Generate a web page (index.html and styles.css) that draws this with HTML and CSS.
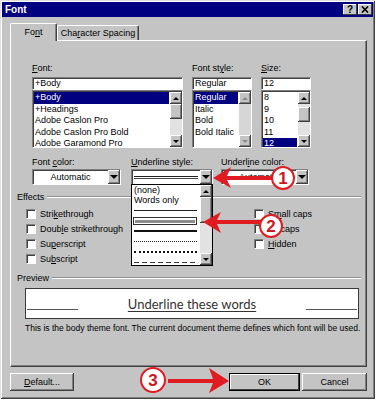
FILE: index.html
```html
<!DOCTYPE html>
<html lang="en">
<head>
    <meta charset="UTF-8">
    <title>Font</title>
    <link rel="stylesheet" href="styles.css">
</head>
<body>

<div class="dialog">
    <div class="titlebar">
        <span class="title">Font</span>
        <div class="title-buttons">
            <span class="tbtn">?</span>
            <span class="tbtn">
                <svg width="8" height="7" viewBox="0 0 8 7"><path d="M1 0.5 L7 6.5 M7 0.5 L1 6.5" stroke="#000" stroke-width="1.6"/></svg>
            </span>
        </div>
    </div>

    <div class="content">
        <div class="tabs">
            <div class="tab active">Fo<u>n</u>t</div>
            <div class="tab">Cha<u>r</u>acter Spacing</div>
        </div>

        <div class="panel">
            <div class="pickers">
                <div class="picker picker-font">
                    <div class="lbl"><u>F</u>ont:</div>
                    <div class="field">+Body</div>
                    <div class="list">
                        <div class="items">
                            <div class="item sel">+Body</div>
                            <div class="item">+Headings</div>
                            <div class="item">Adobe Caslon Pro</div>
                            <div class="item">Adobe Caslon Pro Bold</div>
                            <div class="item">Adobe Garamond Pro</div>
                        </div>
                        <div class="sbar">
                            <div class="sbtn"><i class="up"></i></div>
                            <div class="thumb"></div>
                            <div class="track"></div>
                            <div class="sbtn"><i class="down"></i></div>
                        </div>
                    </div>
                </div>
                <div class="picker picker-style">
                    <div class="lbl">Font st<u>y</u>le:</div>
                    <div class="field">Regular</div>
                    <div class="list">
                        <div class="items">
                            <div class="item sel">Regular</div>
                            <div class="item">Italic</div>
                            <div class="item">Bold</div>
                            <div class="item">Bold Italic</div>
                        </div>
                        <div class="sbar disabled">
                            <div class="sbtn"><i class="up"></i></div>
                            <div class="track"></div>
                            <div class="sbtn"><i class="down"></i></div>
                        </div>
                    </div>
                </div>
                <div class="picker picker-size">
                    <div class="lbl"><u>S</u>ize:</div>
                    <div class="field">12</div>
                    <div class="list">
                        <div class="items">
                            <div class="item">8</div>
                            <div class="item">9</div>
                            <div class="item">10</div>
                            <div class="item">11</div>
                            <div class="item sel">12</div>
                        </div>
                        <div class="sbar">
                            <div class="sbtn"><i class="up"></i></div>
                            <div class="track short"></div>
                            <div class="thumb"></div>
                            <div class="track"></div>
                            <div class="sbtn"><i class="down"></i></div>
                        </div>
                    </div>
                </div>
            </div>

            <div class="dropdowns">
                <div class="dropdown dd-color">
                    <div class="lbl">Font <u>c</u>olor:</div>
                    <div class="combo">
                        <div class="combo-value">Automatic</div>
                        <div class="combo-btn"><i class="down big"></i></div>
                    </div>
                </div>
                <div class="dropdown dd-style">
                    <div class="lbl"><u>U</u>nderline style:</div>
                    <div class="combo">
                        <div class="combo-value"><span class="uline single"></span></div>
                        <div class="combo-btn"><i class="down big"></i></div>
                    </div>
                </div>
                <div class="dropdown dd-ucolor">
                    <div class="lbl">Underl<u>i</u>ne color:</div>
                    <div class="combo">
                        <div class="combo-value">Automatic</div>
                        <div class="combo-btn"><i class="down big"></i></div>
                    </div>
                </div>
            </div>

            <div class="group effects-group">
                <div class="group-head"><span>Effects</span></div>
                <div class="effects">
                    <div class="col col-left">
                        <div class="check"><span class="box"></span>Stri<u>k</u>ethrough</div>
                        <div class="check"><span class="box"></span>Doub<u>l</u>e strikethrough</div>
                        <div class="check"><span class="box"></span>Su<u>p</u>erscript</div>
                        <div class="check"><span class="box"></span>Su<u>b</u>script</div>
                    </div>
                    <div class="col">
                        <div class="check"><span class="box"></span>S<u>m</u>all caps</div>
                        <div class="check"><span class="box"></span><u>A</u>ll caps</div>
                        <div class="check"><span class="box"></span><u>H</u>idden</div>
                    </div>
                </div>
            </div>

            <div class="group preview-group">
                <div class="group-head"><span>Preview</span></div>
                <div class="preview-box">
                    <span class="pline"></span>
                    <span class="sample">Underline these words</span>
                    <span class="pline"></span>
                </div>
                <div class="desc">This is the body theme font. The current document theme defines which font will be used.</div>
            </div>
        </div>

        <div class="actions">
            <div class="btn btn-default"><u>D</u>efault...</div>
            <div class="spacer"></div>
            <div class="btn btn-ok">OK</div>
            <div class="btn btn-cancel">Cancel</div>
        </div>
    </div>

    <!-- open underline style list -->
    <div class="droplist">
        <div class="drop-items">
            <div class="drow">(none)</div>
            <div class="drow">Words only</div>
            <div class="drow"><span class="uline single"></span></div>
            <div class="drow"><span class="focus"><span class="uline grey"></span></span></div>
            <div class="drow"><span class="uline thick"></span></div>
            <div class="drow"><span class="uline dotted"></span></div>
            <div class="drow"><span class="uline dotted-bold"></span></div>
            <div class="drow"><span class="uline dashed"></span></div>
        </div>
        <div class="sbar">
            <div class="sbtn"><i class="up"></i></div>
            <div class="thumb tall"></div>
            <div class="track"></div>
            <div class="sbtn"><i class="down"></i></div>
        </div>
    </div>

    <svg class="marks" width="376" height="400" viewBox="0 0 376 400">
        <g fill="#e01b22">
            <polygon points="213,178 231,167 227,176 272,176 272,180 227,180 231,188"/>
            <polygon points="203,222 221,212 217,220 261,220 261,224 217,224 221,233"/>
            <polygon points="229,381 209,368 213,379 168,379 168,383 213,383 209,393"/>
        </g>
        <g fill="#fff" stroke="#e01b22" stroke-width="2">
            <circle cx="283" cy="178" r="11"/>
            <circle cx="271" cy="226" r="11"/>
            <circle cx="153" cy="380" r="12"/>
        </g>
        <g class="num" fill="#d0151c" text-anchor="middle">
            <text x="283" y="184">1</text>
            <text x="271" y="232">2</text>
            <text x="153" y="386">3</text>
        </g>
    </svg>
</div>

</body>
</html>
```

FILE: styles.css
```css
* {
    box-sizing: border-box;
}
body {
    margin: 0;
    background: #fff;
    font-family: "Liberation Sans", Arial, sans-serif;
    font-size: 9px;
    color: #000;
}
u {
    text-underline-offset: 1px;
}
.dialog {
    position: relative;
    width: 375px;
    height: 399px;
    padding: 2px;
    background: #c4c4c4;
    box-shadow: inset 1px 1px 0 #dfdfdf, inset -1px -1px 0 #404040,
                inset 2px 2px 0 #fff, inset -2px -2px 0 #808080;
}
.titlebar {
    height: 15px;
    background: #000080;
    display: flex;
    align-items: center;
    justify-content: space-between;
    padding: 0 1px 0 3px;
}
.title {
    color: #fff;
    font-weight: bold;
    font-size: 10px;
}
.title-buttons {
    display: flex;
    gap: 1px;
}
.tbtn {
    width: 14px;
    height: 11px;
    background: #c4c4c4;
    display: flex;
    align-items: center;
    justify-content: center;
    font-weight: bold;
    font-size: 10px;
    line-height: 11px;
    box-shadow: inset -1px -1px 0 #404040, inset 1px 1px 0 #fff;
}
.content {
    padding: 6px 6px 0 8px;
}

/* tabs */
.tabs {
    display: flex;
    align-items: flex-start;
    height: 17px;
    position: relative;
    z-index: 1;
}
.tab {
    width: 82px;
    height: 15px;
    margin-top: 2px;
    text-align: center;
    line-height: 14px;
    background: #c4c4c4;
    border-top: 1px solid #fff;
    border-left: 1px solid #fff;
    border-right: 1px solid #404040;
    border-radius: 2px 2px 0 0;
    box-shadow: inset -1px 0 0 #808080;
}
.tab.active {
    width: 47px;
    height: 18px;
    margin-top: 0;
    line-height: 16px;
}
.panel {
    height: 327px;
    padding: 22px 5px 0 6px;
    border-top: 1px solid #fff;
    border-left: 1px solid #fff;
    border-right: 1px solid #404040;
    border-bottom: 1px solid #404040;
    box-shadow: inset -1px -1px 0 #808080;
}

/* sunken / raised */
.field, .list, .combo, .box {
    background: #fff;
    border: 1px solid;
    border-color: #808080 #fff #fff #808080;
    box-shadow: inset 1px 1px 0 #404040;
}
.sbtn, .thumb, .combo-btn, .btn {
    background: #c4c4c4;
    box-shadow: inset -1px -1px 0 #404040, inset 1px 1px 0 #fff, inset -2px -2px 0 #808080;
}

.lbl {
    height: 10px;
    line-height: 10px;
    white-space: nowrap;
}

/* font / style / size pickers */
.pickers {
    display: flex;
    margin-left: 15px;
}
.picker + .picker {
    margin-left: 9px;
}
.picker-font { width: 151px; }
.picker-style { width: 60px; }
.picker-size { width: 50px; }
.picker .lbl {
    margin-bottom: 4px;
}
.field {
    height: 13px;
    line-height: 11px;
    padding-left: 2px;
}
.list {
    height: 58px;
    display: flex;
}
.items {
    flex: 1;
    min-width: 0;
    padding: 1px 1px 0 1px;
    overflow: hidden;
}
.item {
    height: 11.5px;
    line-height: 11.5px;
    padding-left: 1px;
    white-space: nowrap;
}
.item.sel {
    background: #000080;
    color: #fff;
}

/* scrollbars */
.sbar {
    flex: none;
    width: 12px;
    display: flex;
    flex-direction: column;
}
.list .sbar {
    margin-top: 1px;
}
.sbtn {
    height: 12px;
    flex: none;
    display: flex;
    align-items: center;
    justify-content: center;
}
.thumb {
    height: 15px;
    flex: none;
}
.thumb.tall {
    height: 26px;
}
.track {
    flex: 1;
    background: #e2e2e2;
}
.track.short {
    flex: none;
    height: 3px;
}
.up, .down {
    display: block;
    width: 0;
    height: 0;
    border-left: 3px solid transparent;
    border-right: 3px solid transparent;
}
.up {
    border-bottom: 3px solid #000;
}
.down {
    border-top: 3px solid #000;
}
.down.big {
    border-left-width: 4px;
    border-right-width: 4px;
    border-top-width: 4px;
}
.sbar.disabled .up { border-bottom-color: #8a8a8a; }
.sbar.disabled .down { border-top-color: #8a8a8a; }
.sbar.disabled .track { background: #d6d6d6; }

/* dropdowns */
.dropdowns {
    display: flex;
    margin: 9px 0 0 15px;
}
.dropdown .lbl {
    margin-bottom: 2px;
}
.dd-color { width: 89px; }
.dd-style { width: 82px; margin-left: 10px; }
.dd-ucolor { width: 88px; margin-left: 8px; }
.combo {
    height: 16px;
    display: flex;
}
.combo-value {
    flex: 1;
    display: flex;
    align-items: center;
    justify-content: center;
    padding: 0 2px;
}
.combo-btn {
    flex: none;
    width: 12px;
    display: flex;
    align-items: center;
    justify-content: center;
}
.uline {
    display: block;
    width: 100%;
}
.uline.single { border-top: 1px solid #222; }
.uline.thick { border-top: 2px solid #111; }
.uline.grey { border-top: 3px solid #8c8c8c; }
.uline.dotted { border-top: 1px dotted #222; }
.uline.dotted-bold { border-top: 2px dotted #111; }
.uline.dashed {
    height: 1px;
    background: repeating-linear-gradient(90deg, #333 0 5px, transparent 5px 8px);
}
.combo .uline.single {
    border-top: 1px solid #222;
    border-bottom: 1px solid #444;
    height: 3px;
}

/* groups */
.group {
    margin-top: 7px;
}
.group-head {
    display: flex;
    align-items: center;
    height: 10px;
    line-height: 10px;
}
.group-head span {
    padding-right: 3px;
}
.group-head::after {
    content: "";
    flex: 1;
    border-top: 1px solid #909090;
    border-bottom: 1px solid #fff;
}
.effects {
    display: flex;
    margin-top: 4px;
}
.col-left {
    width: 237px;
    padding-left: 9px;
}
.check {
    height: 15px;
    display: flex;
    align-items: center;
    white-space: nowrap;
}
.box {
    width: 10px;
    height: 10px;
    margin-right: 4px;
}

/* preview */
.preview-box {
    height: 31px;
    margin: 5px 2px 0 8px;
    background: #fff;
    border: 1px solid #3a3a3a;
    display: flex;
    align-items: center;
    justify-content: space-between;
    padding: 0 1px;
}
.pline {
    width: 51px;
    height: 1px;
    background: #555;
    margin-top: 11px;
}
.sample {
    font-family: Lato, "Liberation Sans", sans-serif;
    font-size: 13px;
    color: #333;
    text-decoration: underline;
    text-underline-offset: 2px;
    margin-top: 1px;
}
.desc {
    margin: 4px 0 0 8px;
    font-size: 8.5px;
    line-height: 10px;
    white-space: nowrap;
}

/* buttons */
.actions {
    display: flex;
    margin-top: 6px;
}
.spacer {
    flex: 1;
}
.btn {
    height: 18px;
    line-height: 18px;
    text-align: center;
}
.btn-default { width: 64px; }
.btn-ok {
    width: 71px;
    box-shadow: inset 0 0 0 1px #000, inset -2px -2px 0 #404040, inset 2px 2px 0 #fff;
}
.btn-cancel {
    width: 65px;
    margin-left: 2px;
}

/* open list of the underline style box */
.droplist {
    position: absolute;
    left: 131px;
    top: 184px;
    width: 82px;
    height: 82px;
    background: #fff;
    border: 1px solid #000;
    display: flex;
}
.drop-items {
    flex: 1;
    min-width: 0;
    padding: 0 3px 0 1px;
}
.drow {
    height: 10.3px;
    line-height: 10.3px;
    display: flex;
    align-items: center;
    padding-left: 1px;
    white-space: nowrap;
}
.focus {
    display: flex;
    align-items: center;
    width: calc(100% + 2px);
    height: 8px;
    margin-left: -1px;
    border: 1px solid #333;
    padding: 0 1px;
}

/* red callouts drawn over the dialog */
.marks {
    position: absolute;
    left: 0;
    top: 0;
    pointer-events: none;
}
.num {
    font-family: "Liberation Sans", Arial, sans-serif;
    font-weight: bold;
    font-size: 17px;
}
```
